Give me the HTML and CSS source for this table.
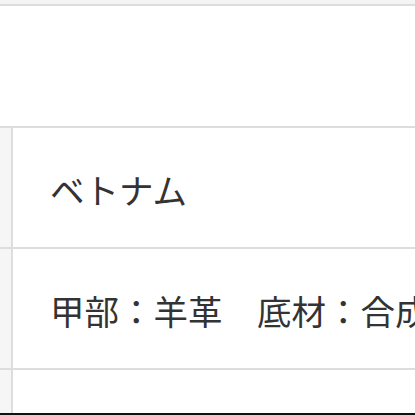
FILE: index.html
```html
<!DOCTYPE html>
<html lang="ja">
<head>
<meta charset="utf-8">
<link rel="stylesheet" href="styles.css">
</head>
<body>
<div class="page">
  <div class="strip"></div>
  <div class="spec">
    <div class="row row-full"></div>
    <div class="row">
      <div class="label"></div>
      <div class="value">ベトナム</div>
    </div>
    <div class="row">
      <div class="label"></div>
      <div class="value">甲部：羊革　底材：合成ゴム</div>
    </div>
    <div class="row row-last">
      <div class="label"></div>
      <div class="value"></div>
    </div>
  </div>
  <div class="bottom-bar"></div>
</div>
</body>
</html>
```
FILE: styles.css
```css
html, body {
  margin: 0;
  padding: 0;
  background: #ffffff;
  overflow: hidden;
}
.page {
  width: 415px;
  height: 415px;
  display: flex;
  flex-direction: column;
  overflow: hidden;
  font-family: "Noto Sans CJK JP", "Noto Sans", sans-serif;
  color: #333333;
}
.strip {
  height: 4px;
  background: #f4f4f4;
  flex: none;
}
.spec {
  flex: 1;
  display: flex;
  flex-direction: column;
  border-top: 2px solid #dddddd;
  min-height: 0;
}
.row {
  display: grid;
  grid-template-columns: 13px 1fr;
  height: 119px;
  border-bottom: 2px solid #dddddd;
  flex: none;
}
.row-full {
  display: block;
  height: 120px;
  background: #ffffff;
}
.row-last {
  flex: 1;
  height: auto;
  border-bottom: none;
}
.label {
  background: #f6f6f6;
  border-right: 2px solid #dddddd;
}
.value {
  display: flex;
  align-items: center;
  padding-left: 37px;
  padding-top: 4px;
  font-size: 34.5px;
  line-height: 1;
  white-space: nowrap;
  overflow: hidden;
  background: #ffffff;
}
.bottom-bar {
  height: 2px;
  background: #111111;
  flex: none;
}
```
